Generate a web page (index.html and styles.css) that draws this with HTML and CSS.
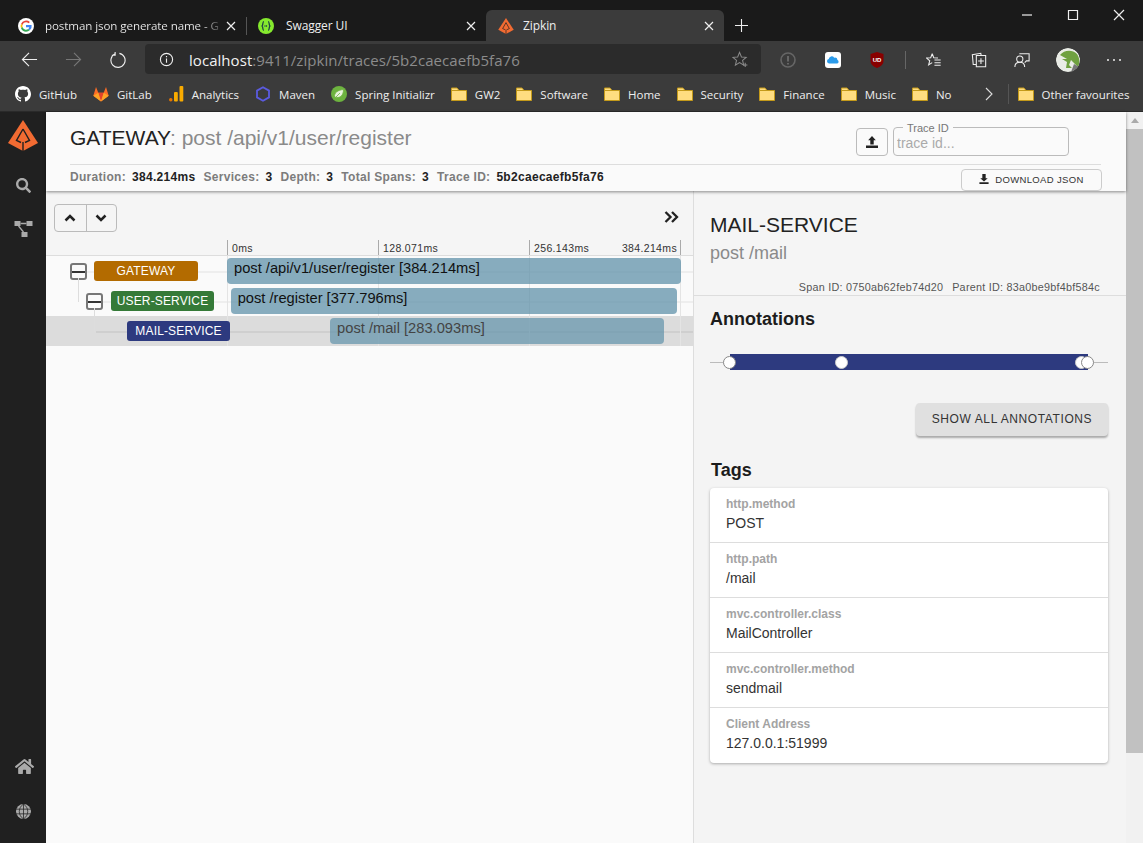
FILE: index.html
```html
<!DOCTYPE html>
<html>
<head>
<meta charset="utf-8">
<title>Zipkin</title>
<link rel="stylesheet" href="styles.css">
</head>
<body>
<div class="browser">
  <div class="tabstrip">
    <div class="tab tab-first">
      <svg class="favicon" viewBox="0 0 16 16"><circle cx="8" cy="8" r="8" fill="#fff"/><path d="M8 4.200a3.800 3.800 0 0 1 2.600 1l1.300-1.300A5.700 5.700 0 0 0 3 5.900l1.500 1.200A3.700 3.700 0 0 1 8 4.200z" fill="#ea4335"/><path d="M4.500 9L3 10.200a5.700 5.700 0 0 1 0-4.300l1.500 1.200a3.700 3.700 0 0 0 0 1.900z" fill="#fbbc05"/><path d="M8 13.700a5.600 5.600 0 0 0 3.800-1.400l-1.500-1.200A3.700 3.700 0 0 1 4.500 9L3 10.200a5.700 5.700 0 0 0 5 3.500z" fill="#34a853"/><path d="M13.600 7H8v2.200h3.200a2.800 2.800 0 0 1-.9 1.900l1.500 1.200A5.700 5.700 0 0 0 13.600 7z" fill="#4285f4"/></svg>
      <span class="tab-title fade">postman json generate name - G</span>
      <svg class="tab-close" viewBox="0 0 10 10"><path d="M1 1l8 8M9 1l-8 8"/></svg>
    </div>
    <div class="tab tab-second">
      <svg class="favicon" viewBox="0 0 16 16"><circle cx="8" cy="8" r="8" fill="#85ea2d"/><path d="M6 3.500C4.500 3.500 5 6.500 4.500 7.300 4.200 7.800 3.800 8 3.500 8c.3 0 .7.200 1 .7C5 9.500 4.500 12.500 6 12.500M10 3.500c1.500 0 1 3 1.500 3.800.3.500.7.700 1 .7-.3 0-.7.200-1 .7-.5.800 0 3.800-1.500 3.800" fill="none" stroke="#173647" stroke-width="1.200"/><path d="M6.500 8h3" stroke="#173647" stroke-width="1.300" stroke-dasharray="1 .6"/></svg>
      <span class="tab-title">Swagger UI</span>
      <svg class="tab-close" viewBox="0 0 10 10"><path d="M1 1l8 8M9 1l-8 8"/></svg>
    </div>
    <div class="tab tab-active">
      <svg class="favicon" viewBox="0 0 30 31"><path class="logo-fill" d="M15 0L30 23 15 31 0 23z"/><path class="logo-cut" d="M15 9L8.500 20.500 13 22.500M15 9l6.500 11.500L17 22.500M15 22v9"/></svg>
      <span class="tab-title">Zipkin</span>
      <svg class="tab-close" viewBox="0 0 10 10"><path d="M1 1l8 8M9 1l-8 8"/></svg>
    </div>
    <svg class="new-tab" viewBox="0 0 14 14"><path d="M7 0v14M0 7h14"/></svg>
    <div class="window-controls">
      <svg viewBox="0 0 10 10"><path d="M0 5h10"/></svg>
      <svg viewBox="0 0 10 10"><path d="M.5.5h9v9h-9z"/></svg>
      <svg viewBox="0 0 10 10"><path d="M0 0l10 10M10 0L0 10"/></svg>
    </div>
  </div>

  <div class="toolbar">
    <svg class="nav-icon" viewBox="0 0 18 18"><path d="M17 9H1.500M8.500 2L1.500 9l7 7"/></svg>
    <svg class="nav-icon nav-off" viewBox="0 0 18 18"><path d="M1 9h15.500M9.500 2l7 7-7 7"/></svg>
    <svg class="nav-icon" viewBox="0 0 18 18"><path d="M6.500 2.500A7.500 7.500 0 1 0 11 2M6.500 .5v3.500h-3.500" transform="translate(0 .5)"/></svg>
    <div class="address">
      <svg class="info-icon" viewBox="0 0 16 16"><circle cx="8" cy="8" r="6.500"/><path d="M8 7v4.500M8 4.300v1.400"/></svg>
      <span class="url"><b>localhost</b>:9411/zipkin/traces/5b2caecaefb5fa76</span>
      <svg class="star-icon" viewBox="0 0 18 18"><path d="M8 1.500l2 4.800 5 .4-3.800 3.300 1.200 5L8 12.300 3.600 15l1.200-5L1 6.700l5-.4z"/><path d="M14 12.500v4.500M11.800 14.800h4.500"/></svg>
    </div>
    <div class="ext-icons">
      <svg class="ext" viewBox="0 0 16 16"><circle cx="8" cy="8" r="7" fill="none" stroke="#666" stroke-width="1.600"/><path d="M8 4v5.500M8 11v1.500" stroke="#666" stroke-width="2"/></svg>
      <svg class="ext" viewBox="0 0 16 16"><rect width="16" height="16" rx="3" fill="#fff"/><path d="M4 11.500a2.300 2.300 0 0 1-.3-4.500 3 3 0 0 1 5.500-1.300 2.800 2.800 0 0 1 3.300 2.400 1.800 1.800 0 0 1-.3 3.400z" fill="#2b9bea"/></svg>
      <svg class="ext ext-tight" viewBox="0 0 16 16"><path d="M8 0l6.500 2v7c0 3.500-3.500 6-6.500 7-3-1-6.500-3.500-6.500-7V2z" fill="#800"/><text x="8" y="10" class="ublock-text">UD</text></svg>
      <span class="tool-sep"></span>
      <svg class="ext line-icon" viewBox="0 0 18 18"><path d="M7 2l1.700 4.500 4.800.3M7 2L5.300 6.500l-4.800.3 3.700 3-1.200 4.700L7 12M9.500 9h7M9.500 12h7M9.500 15h7"/></svg>
      <svg class="ext line-icon" viewBox="0 0 18 18"><path d="M6 4h10.500v12.500H6zM11.200 7v6.500M8 10.200h6.500M6 14H2.500L1.500 3 11 1.500l.5 2.500"/></svg>
      <svg class="ext ext-tighter line-icon" viewBox="0 0 18 18"><circle cx="6.500" cy="8" r="3.500"/><path d="M1 17c0-3.500 2.500-5.500 5.500-5.500S12 13.500 12 17M6 2h11v8h-3l-2 2"/></svg>
      <svg class="avatar" viewBox="0 0 24 24"><circle cx="12" cy="12" r="12" fill="#e9ece6"/><path d="M4 7c4-5 12-6 17-1 3 5 3 9 1 13l-7-7-2 5 3 3-6 0 1-6-5-3 5 0z" fill="#6fa140"/><path d="M15 24l3-8 5 3a12 12 0 0 1-8 5z" fill="#777"/></svg>
      <svg class="more" viewBox="0 0 16 4"><circle cx="2" cy="2" r="1"/><circle cx="8" cy="2" r="1"/><circle cx="14" cy="2" r="1"/></svg>
    </div>
  </div>

  <div class="bookmarks">
    <div class="bookmark"><svg class="favicon" viewBox="0 0 16 16"><path fill="#fff" d="M8 0C3.600 0 0 3.600 0 8c0 3.500 2.300 6.500 5.500 7.600.4.100.5-.2.500-.4v-1.400c-2.200.5-2.700-1-2.700-1-.4-.9-.9-1.200-.9-1.200-.7-.5.100-.5.100-.5.800.1 1.200.8 1.200.8.700 1.200 1.900.9 2.300.7.100-.5.300-.9.500-1.100-1.800-.2-3.600-.9-3.600-4 0-.9.300-1.600.8-2.100-.1-.2-.4-1 .1-2.100 0 0 .7-.2 2.200.8.600-.2 1.300-.3 2-.3s1.400.1 2 .3c1.500-1 2.200-.8 2.200-.8.400 1.100.2 1.900.1 2.100.5.600.8 1.300.8 2.100 0 3.100-1.900 3.700-3.700 3.900.3.300.6.800.6 1.500v2.200c0 .2.100.5.600.4C13.700 14.500 16 11.500 16 8c0-4.400-3.600-8-8-8z"/></svg><span>GitHub</span></div>
    <div class="bookmark"><svg class="favicon" viewBox="0 0 16 16"><path d="M8 15.500L.3 9.800 3 1l2.300 5.800h5.400L13 1l2.700 8.800z" fill="#fc6d26"/><path d="M8 15.500L5.300 6.800h5.400z" fill="#e24329"/><path d="M.3 9.800L8 15.500 5.300 6.800zM15.700 9.800L8 15.500l2.700-8.700z" fill="#fca326"/></svg><span>GitLab</span></div>
    <div class="bookmark"><svg class="favicon" viewBox="0 0 16 16"><rect x="1" y="12" width="3.500" height="3.500" rx="1.700" fill="#e37400"/><rect x="6" y="6" width="3.800" height="9.500" rx="1" fill="#f9ab00"/><rect x="11.500" y="0" width="3.800" height="15.500" rx="1" fill="#f9ab00"/></svg><span>Analytics</span></div>
    <div class="bookmark"><svg class="favicon" viewBox="0 0 16 16"><path d="M8 1.200l6 3.400v6.800l-6 3.400-6-3.400V4.600z" fill="none" stroke="#5b5be0" stroke-width="1.800"/></svg><span>Maven</span></div>
    <div class="bookmark"><svg class="favicon" viewBox="0 0 16 16"><circle cx="8" cy="8" r="8" fill="#6db33f"/><path d="M3.500 11C3 6.500 7 4 12.500 3.500 12.500 9 9.500 13 3.500 11zM4 12l5-5" fill="#e8f3dc" stroke="#6db33f" stroke-width=".8"/></svg><span>Spring Initializr</span></div>
    <div class="bookmark"><svg class="folder" viewBox="0 0 16 14"><use href="#folder"/></svg><span>GW2</span></div>
    <div class="bookmark"><svg class="folder" viewBox="0 0 16 14"><use href="#folder"/></svg><span>Software</span></div>
    <div class="bookmark"><svg class="folder" viewBox="0 0 16 14"><use href="#folder"/></svg><span>Home</span></div>
    <div class="bookmark"><svg class="folder" viewBox="0 0 16 14"><use href="#folder"/></svg><span>Security</span></div>
    <div class="bookmark"><svg class="folder" viewBox="0 0 16 14"><use href="#folder"/></svg><span>Finance</span></div>
    <div class="bookmark"><svg class="folder" viewBox="0 0 16 14"><use href="#folder"/></svg><span>Music</span></div>
    <div class="bookmark"><svg class="folder" viewBox="0 0 16 14"><use href="#folder"/></svg><span>No</span></div>
    <svg class="bm-more" viewBox="0 0 8 14"><path d="M1 1l6 6-6 6"/></svg>
    <span class="bm-sep"></span>
    <div class="bookmark bm-other"><svg class="folder" viewBox="0 0 16 14"><use href="#folder"/></svg><span>Other favourites</span></div>
  </div>
</div>

<svg class="defs"><defs><g id="folder"><path d="M.5 1h5.500l2 2.500h7.500v10H.5z" fill="#ffdd80" stroke="#c49a1a"/><path d="M1 3.500h14" stroke="#c49a1a"/></g></defs></svg>

<div class="app">
  <nav class="sidebar">
    <svg class="logo" viewBox="0 0 30 31"><path class="logo-fill" d="M15 0L30 23 15 31 0 23z"/><path class="logo-cut" d="M15 9L8.500 20.500 13 22.500M15 9l6.500 11.500L17 22.500M15 22v9"/></svg>
    <svg class="side-icon" viewBox="0 0 512 512"><path d="M505 442.700L405.300 343c-4.500-4.500-10.600-7-17-7H372c27.600-35.300 44-79.700 44-128C416 93.100 322.900 0 208 0S0 93.100 0 208s93.100 208 208 208c48.300 0 92.700-16.400 128-44v16.300c0 6.400 2.500 12.500 7 17l99.700 99.700c9.400 9.400 24.600 9.400 33.900 0l28.300-28.300c9.400-9.400 9.400-24.600.1-34zM208 336c-70.700 0-128-57.200-128-128 0-70.700 57.200-128 128-128 70.700 0 128 57.200 128 128 0 70.700-57.200 128-128 128z"/></svg>
    <svg class="side-icon dep-icon" viewBox="0 0 18 16"><rect x="0" y="0" width="6" height="5"/><rect x="12" y="0" width="6" height="5"/><rect x="7" y="11" width="6" height="5"/><path d="M6 2.500h6M4 5l5 6" stroke="#aaa" stroke-width="1.300"/></svg>
    <div class="side-spacer"></div>
    <svg class="side-icon home-icon" viewBox="0 0 576 512"><path d="M280.400 148.300L96 300.100V464a16 16 0 0 0 16 16l112.100-.3a16 16 0 0 0 15.900-16V368a16 16 0 0 1 16-16h64a16 16 0 0 1 16 16v95.600a16 16 0 0 0 16 16l112 .4a16 16 0 0 0 16-16V300L295.700 148.300a12.200 12.200 0 0 0-15.300 0zM571.600 251.500L488 182.600V44a12 12 0 0 0-12-12h-56a12 12 0 0 0-12 12v72.600L318.500 43a48 48 0 0 0-61 0L4.300 251.500a12 12 0 0 0-1.600 16.900l25.500 31A12 12 0 0 0 45.200 301l235.200-193.700a12.200 12.200 0 0 1 15.300 0L530.900 301a12 12 0 0 0 16.900-1.600l25.500-31a12 12 0 0 0-1.700-16.900z"/></svg>
    <svg class="side-icon globe" viewBox="0 0 16 16"><circle cx="8" cy="8" r="8"/><path d="M0 5.500h16M0 10.500h16M8 0v16M8 0c-6 4-6 12 0 16M8 0c6 4 6 12 0 16" fill="none" stroke="#202020" stroke-width=".8"/></svg>
  </nav>

  <main class="main">
    <header class="trace-header">
      <div class="trace-top">
        <h1 class="trace-title">GATEWAY<span class="trace-sub">: post /api/v1/user/register</span></h1>
        <div class="trace-tools">
          <button class="upload-btn"><svg viewBox="0 0 14 14"><path d="M7 0l4.500 5H9v5H5V5H2.500zM0 11h14v3H0z"/></svg></button>
          <fieldset class="trace-field">
            <legend>Trace ID</legend>
            <input placeholder="trace id...">
          </fieldset>
        </div>
      </div>
      <div class="trace-bottom">
        <div class="stats">
          <span class="stat-label">Duration:</span><b>384.214ms</b>
          <span class="stat-label">Services:</span><b>3</b>
          <span class="stat-label">Depth:</span><b>3</b>
          <span class="stat-label">Total Spans:</span><b>3</b>
          <span class="stat-label">Trace ID:</span><b>5b2caecaefb5fa76</b>
        </div>
        <button class="download-btn"><svg viewBox="0 0 12 12"><path d="M4 0h4v5h2.500L6 9 1.500 5H4zM.5 10h11v2H.5z"/></svg>DOWNLOAD JSON</button>
      </div>
    </header>

    <div class="content">
      <section class="timeline">
        <div class="timeline-tools">
          <div class="btn-group">
            <button><svg viewBox="0 0 12 8"><path d="M1.500 6.500L6 2l4.500 4.500"/></svg></button>
            <button><svg viewBox="0 0 12 8"><path d="M1.500 1.500L6 6l4.500-4.500"/></svg></button>
          </div>
          <svg class="collapse-icon" viewBox="0 0 15 12"><path d="M1.500 1l5 5-5 5M8 1l5 5-5 5"/></svg>
        </div>
        <div class="ticks">
          <span class="tick tick-a">0ms</span>
          <span class="tick tick-b">128.071ms</span>
          <span class="tick tick-c">256.143ms</span>
          <span class="tick tick-d">384.214ms</span>
        </div>
        <div class="rows">
          <div class="gridlines"><i></i><i></i><i></i><i></i></div>
          <div class="row">
            <div class="row-name depth0">
              <span class="toggle"></span>
              <span class="badge gateway">GATEWAY</span>
            </div>
            <div class="track"><div class="bar" style="left:0%;width:100%">post /api/v1/user/register [384.214ms]</div></div>
          </div>
          <div class="row">
            <div class="row-name depth1">
              <span class="toggle"></span>
              <span class="badge user">USER-SERVICE</span>
            </div>
            <div class="track"><div class="bar" style="left:0.8%;width:98.4%">post /register [377.796ms]</div></div>
          </div>
          <div class="row row-selected">
            <div class="row-name depth2">
              <span class="badge mail">MAIL-SERVICE</span>
            </div>
            <div class="track"><div class="bar" style="left:22.7%;width:73.6%">post /mail [283.093ms]</div></div>
          </div>
        </div>
      </section>

      <aside class="detail">
        <div class="detail-head">
          <h2 class="span-service">MAIL-SERVICE</h2>
          <div class="span-name">post /mail</div>
          <div class="span-ids"><span>Span ID: 0750ab62feb74d20</span><span>Parent ID: 83a0be9bf4bf584c</span></div>
        </div>
        <div class="detail-body">
          <h3 class="section-title">Annotations</h3>
          <div class="anno">
            <div class="anno-line"></div>
            <div class="anno-bar"></div>
            <i class="dot dot-a"></i><i class="dot dot-b"></i><i class="dot dot-c"></i><i class="dot dot-d"></i>
          </div>
          <div class="anno-action"><button class="show-all">SHOW ALL ANNOTATIONS</button></div>
          <h3 class="section-title tags-title">Tags</h3>
          <div class="tags">
            <div class="tag"><div class="tag-key">http.method</div><div class="tag-val">POST</div></div>
            <div class="tag"><div class="tag-key">http.path</div><div class="tag-val">/mail</div></div>
            <div class="tag"><div class="tag-key">mvc.controller.class</div><div class="tag-val">MailController</div></div>
            <div class="tag"><div class="tag-key">mvc.controller.method</div><div class="tag-val">sendmail</div></div>
            <div class="tag"><div class="tag-key">Client Address</div><div class="tag-val">127.0.0.1:51999</div></div>
          </div>
        </div>
      </aside>
    </div>
  </main>

  <div class="scrollbar">
    <svg class="scroll-up" viewBox="0 0 8 5"><path d="M4 0l4 5H0z"/></svg>
    <div class="scroll-thumb"></div>
  </div>
</div>
</body>
</html>
```

FILE: styles.css
```css
* { box-sizing: border-box; }

html, body {
  margin: 0;
  height: 843px;
  overflow: hidden;
}
body {
  font-family: "Liberation Sans", Arial, sans-serif;
  background: #fafafa;
  color: #222;
}
button { font-family: inherit; cursor: pointer; }
.defs { position: absolute; width: 0; height: 0; }

/* browser chrome */
.browser {
  height: 112px;
  font-family: "Open Sans", sans-serif;
  color: #eee;
  font-size: 12px;
}
.tabstrip {
  height: 41px;
  background: #1a1a1a;
  display: flex;
  align-items: flex-end;
}
.tab {
  height: 31px;
  width: 239px;
  display: flex;
  align-items: center;
  padding: 0 10px 0 18px;
  position: relative;
}
.tab-first { width: 247px; }
.tab-first::after {
  content: "";
  position: absolute;
  right: 0;
  top: 7px;
  height: 18px;
  border-right: 1px solid #555;
}
.tab-second { padding-left: 11px; }
.tab-active {
  width: 238px;
  background: #3b3b3b;
  border-radius: 6px 6px 0 0;
  padding-left: 12px;
}
.favicon { width: 16px; height: 16px; flex: none; }
.folder { width: 16px; height: 14px; flex: none; }
.tab-title {
  flex: 1;
  margin-left: 11px;
  white-space: nowrap;
  overflow: hidden;
  font-size: 12px;
  letter-spacing: -.1px;
}
.tab-second .tab-title { margin-left: 12px; }
.tab-active .tab-title { margin-left: 9px; }
.fade {
  flex: none;
  width: 175px;
  font-size: 11.600px;
  color: transparent;
  background: linear-gradient(90deg, #eee 90%, #444 100%);
  -webkit-background-clip: text;
  background-clip: text;
}
.tab-first .tab-close { margin-left: 6px; }
.tab-close { width: 10px; height: 10px; margin-left: 8px; flex: none; }
.tab-close path, .new-tab path, .window-controls path, .nav-icon path, .line-icon path, .line-icon circle {
  fill: none;
  stroke: #eee;
  stroke-width: 1.2;
}
.new-tab { width: 13px; height: 13px; margin: 0 0 9px 11px; }
.window-controls {
  margin-left: auto;
  align-self: flex-start;
  display: flex;
  gap: 36px;
  padding: 10px 19px 0 0;
}
.window-controls svg { width: 10px; height: 10px; overflow: visible; }

.toolbar {
  height: 36px;
  background: #3b3b3b;
  display: flex;
  align-items: center;
  padding-left: 21px;
}
.nav-icon { width: 17px; height: 17px; margin-right: 27px; }
.nav-off path { stroke: #777; }
.address {
  width: 616px;
  height: 30px;
  margin-left: -8px;
  background: #2b2b2b;
  border-radius: 4px;
  display: flex;
  align-items: center;
  padding: 0 12px 0 14px;
}
.info-icon { width: 15px; height: 15px; fill: none; stroke: #eee; stroke-width: 1.200; flex: none; }
.url {
  margin-left: 15px;
  padding-top: 1px;
  font-size: 15px;
  letter-spacing: .05px;
  color: #8c8c8c;
  flex: 1;
  white-space: nowrap;
}
.url b { font-weight: 400; color: #f2f2f2; }
.star-icon { width: 17px; height: 17px; fill: none; stroke: #8a8a8a; stroke-width: 1.100; }
.ext-icons { display: flex; align-items: center; margin-top: 2px; }
.ext { width: 16px; height: 16px; margin-left: 29px; flex: none; }
.ext-tight { margin-left: 28px; }
.ext-tighter { margin-left: 27px; }
.ext-icons .ext:first-child { margin-left: 19px; }
.ublock-text { font: 700 6px "Liberation Sans", sans-serif; fill: #fff; text-anchor: middle; }
.tool-sep { height: 18px; border-left: 1px solid #666; margin-left: 20px; }
.tool-sep + .ext { margin-left: 20px; }
.avatar { width: 24px; height: 24px; margin-left: 26px; border-radius: 50%; }
.more { width: 16px; height: 4px; margin-left: 26px; fill: #eee; }

.bookmarks {
  height: 35px;
  background: #3b3b3b;
  border-bottom: 1px solid #2a2a2a;
  display: flex;
  align-items: center;
  padding-left: 15px;
}
.bookmark {
  display: flex;
  align-items: center;
  gap: 8px;
  margin-right: 16px;
  white-space: nowrap;
  font-size: 11.500px;
}
.bm-more { width: 8px; height: 14px; margin-left: 17px; fill: none; stroke: #ddd; stroke-width: 1.100; flex: none; }
.bm-sep { height: 20px; border-left: 1px solid #555; margin: 0 9px 0 15px; flex: none; }
.bm-other { margin-right: 0; }

/* app */
.app {
  height: 731px;
  display: flex;
}
.sidebar {
  width: 46px;
  background: #202020;
  display: flex;
  flex-direction: column;
  align-items: center;
  padding: 8px 0 24px;
  flex: none;
}
.logo { width: 30px; height: 31px; margin-bottom: 27px; }
.logo-fill { fill: #f26b32; }
.logo-cut { fill: none; stroke: #202020; stroke-width: 1.400; }
.side-icon { width: 15px; height: 15px; fill: #aaa; margin-bottom: 28px; }
.dep-icon { width: 19px; height: 16px; }
.side-spacer { flex: 1; }
.sidebar svg:last-child { margin-bottom: 0; }
.home-icon { width: 19px; height: 17px; margin: 0 0 29px 2px; }
.globe { width: 15px; height: 15px; }

.main {
  flex: 1;
  min-width: 0;
  display: flex;
  flex-direction: column;
}
.trace-header {
  height: 79px;
  background: #fafafa;
  box-shadow: 0 1px 3px rgba(0,0,0,.45);
  padding: 0 25px 0 24px;
  position: relative;
  z-index: 2;
}
.trace-top {
  height: 53px;
  border-bottom: 1px solid #ddd;
  display: flex;
  align-items: center;
  justify-content: space-between;
}
.trace-title {
  margin: 0;
  font-size: 21px;
  font-weight: 400;
  color: #222;
}
.trace-sub { color: #8a8a8a; }
.trace-tools {
  display: flex;
  align-items: flex-end;
  gap: 5px;
  margin: 1px 32px 0 0;
  height: 34px;
}
.upload-btn {
  width: 32px;
  height: 28px;
  padding: 0;
  background: #fafafa;
  border: 1px solid #bbb;
  border-radius: 4px;
}
.upload-btn svg { width: 12px; height: 12px; fill: #222; display: block; margin: auto; }
.trace-field {
  width: 176px;
  height: 34px;
  margin: 0;
  padding: 0 3px;
  border: 1px solid #bbb;
  border-radius: 4px;
  min-width: 0;
}
.trace-field legend {
  font-size: 11px;
  color: #777;
  padding: 0 4px;
  margin-left: 6px;
  line-height: 12px;
}
.trace-field input {
  width: 100%;
  border: 0;
  outline: 0;
  background: transparent;
  padding: 0;
  font: 14px "Liberation Sans", sans-serif;
}
.trace-field input::placeholder { color: #aaa; }
.trace-bottom {
  display: flex;
  justify-content: space-between;
  align-items: flex-end;
  height: 26px;
}
.stats {
  font-size: 12px;
  letter-spacing: .3px;
  align-self: flex-start;
  padding-top: 5px;
  display: flex;
}
.stats b { font-weight: 700; color: #222; margin: 0 8px 0 6px; }
.stat-label { font-weight: 700; color: #7c7c7c; }
.download-btn {
  width: 141px;
  height: 22px;
  padding: 0 0 2px;
  margin-right: -1px;
  background: #fafafa;
  border: 1px solid #ccc;
  border-radius: 4px;
  font-size: 9.500px;
  letter-spacing: .35px;
  color: #333;
  display: flex;
  align-items: center;
  justify-content: center;
  gap: 6px;
}
.download-btn svg { width: 10px; height: 10px; fill: #222; }

.content {
  flex: 1;
  display: flex;
  min-height: 0;
}
.timeline {
  width: 647px;
  background: #fafafa;
  position: relative;
}
.timeline-tools {
  height: 49px;
  background: #f5f5f5;
  display: flex;
  justify-content: space-between;
  align-items: flex-start;
  padding: 13px 14px 0 8px;
}
.btn-group {
  display: flex;
  border: 1px solid #bbb;
  border-radius: 4px;
  height: 28px;
}
.btn-group button {
  width: 30.500px;
  padding: 0;
  background: transparent;
  border: 0;
}
.btn-group button + button { border-left: 1px solid #bbb; }
.btn-group svg { width: 12px; height: 8px; fill: none; stroke: #222; stroke-width: 2.500; display: block; margin: auto; }
.collapse-icon { width: 15px; height: 12px; margin-top: 7px; fill: none; stroke: #222; stroke-width: 2.300; }

.ticks {
  height: 16px;
  background: #f5f5f5;
  border-bottom: 1px solid #ddd;
  position: relative;
  font-size: 10.500px;
  letter-spacing: .35px;
  color: #333;
}
.tick {
  position: absolute;
  top: 0;
  height: 15px;
  line-height: 17px;
}
.tick-a { left: 181px; padding-left: 4px; border-left: 1px solid #aaa; }
.tick-b { left: 332px; padding-left: 4px; border-left: 1px solid #aaa; }
.tick-c { left: 483px; padding-left: 4px; border-left: 1px solid #aaa; }
.tick-d { right: 12px; padding-right: 3px; border-right: 1px solid #aaa; }

.rows { position: relative; }
.gridlines i {
  position: absolute;
  top: 0;
  height: 90px;
  border-left: 1px solid #e4e4e4;
  z-index: 1;
}
.gridlines i:nth-child(1) { left: 181px; }
.gridlines i:nth-child(2) { left: 332px; }
.gridlines i:nth-child(3) { left: 483px; }
.gridlines i:nth-child(4) { left: 634px; }
.row {
  height: 30px;
  display: flex;
  position: relative;
}
.row::before {
  content: "";
  position: absolute;
  left: 40px;
  right: 0;
  top: 15px;
  border-top: 2px solid #eee;
}
.row-selected { background: #dcdcdc; }
.row-selected::before { border-color: #cfcfcf; left: 50px; }
.row-name {
  width: 181px;
  flex: none;
  display: flex;
  align-items: center;
  position: relative;
  z-index: 2;
}
.depth0 { padding-left: 24px; }
.depth1 { padding-left: 40px; }
.depth2 { padding-left: 81px; }
.depth1::before, .depth2::before {
  content: "";
  position: absolute;
  top: -8px;
  height: 24px;
  border-left: 1px solid #ddd;
}
.depth1::before { left: 32px; }
.depth2::before { left: 48px; }
.toggle {
  width: 17px;
  height: 17px;
  border: 2px solid #777;
  border-radius: 3px;
  background: linear-gradient(#fafafa 6px, #333 6px, #333 8px, #fafafa 8px);
  margin-right: 7px;
  flex: none;
}
.depth1 .toggle { margin-right: 8px; }
.badge {
  width: 104px;
  height: 20px;
  flex: none;
  border-radius: 3px;
  color: #fff;
  font-size: 12px;
  letter-spacing: .15px;
  line-height: 20px;
  text-align: center;
}
.depth1 .badge, .depth2 .badge { width: 103px; }
.gateway { background: #b36b00; }
.user { background: #357a38; }
.mail { background: #2d3a7f; }
.track {
  flex: 1;
  margin-right: 12px;
  position: relative;
  z-index: 2;
}
.bar {
  position: absolute;
  top: 2px;
  height: 26px;
  padding: 2px 0 0 7px;
  background: rgba(96,146,170,.75);
  border-radius: 4px;
  font-size: 14.700px;
  line-height: 16px;
  color: #111;
  white-space: nowrap;
}
.row-selected .bar { color: #444; background: rgba(96,146,170,.7); }

.detail {
  flex: 1;
  background: #f4f4f4;
  border-left: 1px solid #ddd;
  min-width: 0;
}
.detail-head {
  height: 105px;
  border-bottom: 1px solid #ddd;
  padding: 22px 26px 0 16px;
  background: #f5f5f5;
}
.span-service { margin: 0; font-size: 21px; font-weight: 400; line-height: 24px; color: #222; }
.span-name { font-size: 18px; line-height: 22px; color: #8a8a8a; margin-top: 5px; }
.span-ids {
  display: flex;
  justify-content: flex-end;
  gap: 9px;
  font-size: 10.800px;
  letter-spacing: .25px;
  color: #555;
  margin-top: 17px;
}
.detail-body { padding: 13px 18px 0 16px; }
.section-title { margin: 0; font-size: 18px; line-height: 21px; font-weight: 700; color: #1c1c1c; }
.anno { position: relative; height: 16px; margin-top: 24px; }
.anno-line { position: absolute; left: 0; right: 0; top: 8px; border-top: 1px solid #bbb; }
.anno-bar { position: absolute; left: 20px; right: 20px; top: 0; height: 16px; background: #2d3a7f; }
.dot {
  position: absolute;
  top: 2px;
  width: 13px;
  height: 13px;
  border-radius: 50%;
  background: #fff;
  border: 1px solid #ccc;
}
.dot-a { left: 13px; border-color: #888; }
.dot-b { left: 125px; }
.dot-c { left: 365px; }
.dot-d { left: 371px; border-color: #888; }
.anno-action { display: flex; justify-content: flex-end; margin-top: 33px; }
.show-all {
  width: 192px;
  height: 33px;
  padding: 0 0 1px;
  background: #e0e0e0;
  border: 0;
  border-radius: 4px;
  box-shadow: 0 2px 2px rgba(0,0,0,.3);
  font-size: 12px;
  letter-spacing: .6px;
  color: #333;
}
.tags-title { margin: 24px 0 0 1px; }
.tags {
  margin-top: 7px;
  background: #fff;
  border-radius: 4px;
  box-shadow: 0 1px 3px rgba(0,0,0,.3);
}
.tag {
  height: 55px;
  padding: 9px 16px 0;
  border-bottom: 1px solid #ddd;
}
.tag:last-child { border-bottom: 0; }
.tag-key { font-size: 12px; line-height: 14px; font-weight: 700; color: #a3a3a3; }
.tag-val { font-size: 14px; line-height: 18px; color: #333; margin-top: 3px; }

.scrollbar {
  width: 17px;
  background: #f1f1f1;
  flex: none;
  display: flex;
  flex-direction: column;
  align-items: center;
}
.scroll-up { width: 8px; height: 5px; margin-top: 6px; fill: #aaa; }
.scroll-thumb { width: 100%; height: 624px; margin-top: 6px; background: #c1c1c1; }
```
